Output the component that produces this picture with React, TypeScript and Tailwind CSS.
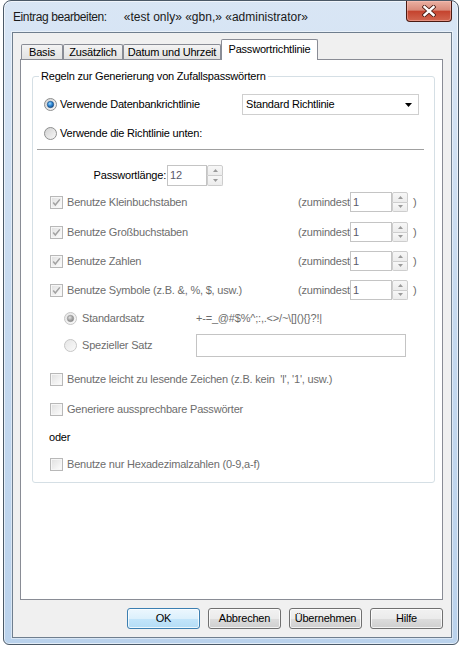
import React from "react";

function Radio({ checked = false, disabled = false }: { checked?: boolean; disabled?: boolean }) {
  return (
    <svg width="13" height="13" viewBox="0 0 13 13" className="shrink-0">
      <defs>
        <linearGradient id="rbg" x1="0" y1="0" x2="1" y2="1">
          <stop offset="0" stopColor="#cfcfcf" />
          <stop offset="1" stopColor="#fafafa" />
        </linearGradient>
        <linearGradient id="rbgd" x1="0" y1="0" x2="1" y2="1">
          <stop offset="0" stopColor="#e4e4e4" />
          <stop offset="1" stopColor="#fbfbfb" />
        </linearGradient>
        <radialGradient id="rdot" cx="0.4" cy="0.35" r="0.75">
          <stop offset="0" stopColor="#a9dcfb" />
          <stop offset="0.45" stopColor="#2f8ad8" />
          <stop offset="1" stopColor="#0d3f78" />
        </radialGradient>
        <radialGradient id="rdotd" cx="0.4" cy="0.35" r="0.75">
          <stop offset="0" stopColor="#e2e2e2" />
          <stop offset="0.5" stopColor="#a8a8a8" />
          <stop offset="1" stopColor="#7d7d7d" />
        </radialGradient>
      </defs>
      <circle cx="6.5" cy="6.5" r="6" fill={disabled ? "url(#rbgd)" : "url(#rbg)"} stroke={disabled ? "#c6c6c6" : "#8e8f8f"} />
      {checked && (
        <circle cx="6.5" cy="6.5" r="3.2" fill={disabled ? "url(#rdotd)" : "url(#rdot)"} stroke={disabled ? "#8e8e8e" : "#16487f"} strokeWidth="0.6" />
      )}
    </svg>
  );
}

function Check({ checked = false }: { checked?: boolean }) {
  return (
    <svg width="13" height="13" viewBox="0 0 13 13" className="shrink-0">
      <defs>
        <linearGradient id="cbg" x1="0" y1="0" x2="1" y2="1">
          <stop offset="0" stopColor="#e2e2e2" />
          <stop offset="1" stopColor="#fbfbfb" />
        </linearGradient>
      </defs>
      <rect x="0.5" y="0.5" width="12" height="12" fill="#f6f6f6" stroke="#b8b8b8" />
      <rect x="2" y="2" width="9" height="9" fill="url(#cbg)" />
      {checked && <path d="M3.2 6.6 L5.3 9 L9.8 3.4" fill="none" stroke="#a2a2a2" strokeWidth="1.5" />}
    </svg>
  );
}

function Spin({ tall = false }: { tall?: boolean }) {
  return (
    <div className={(tall ? "h-[21px]" : "h-[20px]") + " w-[16px] flex flex-col shrink-0"}>
      <div className="flex-1 border border-[#cdcdcd] rounded-t-[2px] bg-gradient-to-b from-[#f7f7f7] to-[#ececec] flex items-center justify-center">
        <svg width="5" height="3" viewBox="0 0 5 3">
          <path d="M0 3 L2.5 0 L5 3Z" fill="#9a9a9a" />
        </svg>
      </div>
      <div className="flex-1 border border-t-0 border-[#cdcdcd] rounded-b-[2px] bg-gradient-to-b from-[#f7f7f7] to-[#ececec] flex items-center justify-center">
        <svg width="5" height="3" viewBox="0 0 5 3">
          <path d="M0 0 L5 0 L2.5 3Z" fill="#9a9a9a" />
        </svg>
      </div>
    </div>
  );
}

function MinRow({ label, mt }: { label: string; mt: string }) {
  return (
    <div className={mt + " h-[20px] flex items-center pl-[17px] pr-[17px]"}>
      <Check checked />
      <span className="ml-[4px] text-[#6d6d6d] whitespace-nowrap">{label}</span>
      <div className="ml-auto flex items-center">
        <span className="w-[52px] text-[#6d6d6d] whitespace-nowrap">(zumindest</span>
        <div className="w-[42px] h-[20px] border border-[#c4c4c4] bg-white flex items-center pl-[2px] text-[#5a5a6a]">1</div>
        <Spin />
        <span className="ml-[5px] w-[4px] text-[#6d6d6d]">)</span>
      </div>
    </div>
  );
}

function Btn({ label, primary = false }: { label: string; primary?: boolean }) {
  return (
    <div
      className={
        "w-[73px] h-[21px] rounded-[3px] border flex items-center justify-center text-black shadow-[inset_0_0_0_1px_rgba(255,255,255,0.75)] " +
        (primary
          ? "border-[#3c7fb1] bg-[linear-gradient(to_bottom,#ecf7fe_0%,#dcf0fc_50%,#c3e5fa_50%,#b4ddf6_100%)]"
          : "border-[#707070] bg-[linear-gradient(to_bottom,#f2f2f2_0%,#ebebeb_50%,#dddddd_50%,#cfcfcf_100%)]")
      }
    >
      {label}
    </div>
  );
}

export default function App() {
  return (
    <div className="w-[462px] h-[647px] bg-white pl-[3px] font-['Liberation_Sans',Arial,sans-serif] text-[11px] tracking-[-0.2px] text-black">
      <div className="w-[456px] h-[645px] flex flex-col rounded-t-[8px] rounded-b-[6px] border border-[#4b5967] bg-gradient-to-b from-[#d9e6f5] via-[#c5d9ef] to-[#bad2ec] pl-[8px] pr-[6px] pb-[6px] shadow-[inset_0_0_0_1px_rgba(255,255,255,0.6)]">
        {/* Title bar */}
        <div className="h-[31px] flex items-start shrink-0">
          <div className="h-[31px] flex items-center pl-[1px] text-[12px] text-[#1a1a1a] whitespace-nowrap">
            <span className="tracking-[-0.4px]">Eintrag bearbeiten:</span>
            <span className="ml-[17px] tracking-[0px]">«test only» «gbn,» «administrator»</span>
          </div>
          <div className="ml-auto w-[46px] h-[21px] rounded-b-[4px] border border-t-0 border-[#4a1a12] bg-[linear-gradient(to_bottom,#eab0a2_0%,#d98b7b_45%,#c5442f_52%,#d26650_100%)] shadow-[inset_0_0_0_1px_rgba(255,200,190,0.45)] flex items-center justify-center">
            <svg width="14" height="12" viewBox="0 0 14 12">
              <path d="M2.5 2 L11.5 10 M11.5 2 L2.5 10" stroke="#4a1c14" strokeWidth="4.2" strokeLinecap="square" />
              <path d="M2.5 2 L11.5 10 M11.5 2 L2.5 10" stroke="#ffffff" strokeWidth="2.4" strokeLinecap="square" />
            </svg>
          </div>
        </div>

        {/* Client */}
        <div className="flex-1 flex flex-col border border-[#6f7e8e] bg-[#f0f0f0] shadow-[0_0_0_1px_rgba(255,255,255,0.45)]">
          <div className="pt-[6px] pl-[7px] pr-[8px]">
            {/* Tab strip */}
            <div className="h-[20px] flex items-end pl-[1px]">
              <div className="w-[42px] h-[15px] border border-b-0 border-[#898c95] rounded-t-[2px] bg-gradient-to-b from-[#f3f3f3] to-[#e2e2e2] flex items-center justify-center">
                Basis
              </div>
              <div className="w-[60px] h-[15px] border border-b-0 border-[#898c95] rounded-t-[2px] bg-gradient-to-b from-[#f3f3f3] to-[#e2e2e2] flex items-center justify-center">
                Zusätzlich
              </div>
              <div className="w-[98px] h-[15px] border border-b-0 border-[#898c95] rounded-t-[2px] bg-gradient-to-b from-[#f3f3f3] to-[#e2e2e2] flex items-center justify-center whitespace-nowrap">
                Datum und Uhrzeit
              </div>
              <div className="relative z-10 -mb-px w-[97px] h-[21px] border border-b-0 border-[#898c95] rounded-t-[2px] bg-white flex items-center justify-center pb-[2px] whitespace-nowrap">
                Passwortrichtlinie
              </div>
            </div>

            {/* Tab panel */}
            <div className="h-[541px] border border-[#898c95] bg-white">
              <fieldset className="mt-[9px] ml-[11px] mr-[7px] border border-[#d5dfe5] rounded-[3px] pb-[8px]">
                <legend className="ml-[6px] px-[2px] leading-[14px]">Regeln zur Generierung von Zufallspasswörtern</legend>

                <div className="mt-[11px] h-[21px] flex items-center">
                  <div className="w-[209px] flex items-center pl-[11px]">
                    <Radio checked />
                    <span className="ml-[3px] whitespace-nowrap">Verwende Datenbankrichtlinie</span>
                  </div>
                  <div className="w-[177px] h-[21px] border border-[#cfcfcf] bg-white flex items-center pl-[3px] pr-[6px]">
                    <span className="whitespace-nowrap">Standard Richtlinie</span>
                    <svg className="ml-auto" width="7" height="4" viewBox="0 0 7 4">
                      <path d="M0 0 L7 0 L3.5 4Z" fill="#000" />
                    </svg>
                  </div>
                </div>

                <div className="mt-[8px] h-[20px] flex items-center pl-[11px]">
                  <Radio />
                  <span className="ml-[3px] whitespace-nowrap">Verwende die Richtlinie unten:</span>
                </div>

                <div className="mt-[6px] ml-[4px] mr-[10px] h-px bg-[#a0a0a0]" />

                <div className="mt-[15px] h-[21px] flex items-center">
                  <span className="w-[134px] pr-[1px] text-right whitespace-nowrap">Passwortlänge:</span>
                  <div className="w-[40px] h-[21px] border border-[#c4c4c4] bg-white flex items-center pl-[2px] text-[#5a5a6a]">12</div>
                  <Spin tall />
                </div>

                <MinRow mt="mt-[6px]" label="Benutze Kleinbuchstaben" />
                <MinRow mt="mt-[10px]" label="Benutze Großbuchstaben" />
                <MinRow mt="mt-[9px]" label="Benutze Zahlen" />
                <MinRow mt="mt-[9px]" label="Benutze Symbole (z.B. &, %, $, usw.)" />

                <div className="mt-[8px] h-[20px] flex items-center">
                  <div className="w-[163px] flex items-center pl-[31px]">
                    <Radio checked disabled />
                    <span className="ml-[5px] text-[#6d6d6d] whitespace-nowrap">Standardsatz</span>
                  </div>
                  <span className="text-[#6d6d6d] whitespace-nowrap">{"+-=_@#$%^;:,.<>/~\\[](){}?!|"}</span>
                </div>

                <div className="mt-[6px] h-[23px] flex items-center">
                  <div className="w-[163px] flex items-center pl-[31px]">
                    <Radio disabled />
                    <span className="ml-[5px] text-[#6d6d6d] whitespace-nowrap">Spezieller Satz</span>
                  </div>
                  <div className="w-[210px] h-[23px] border border-[#c4c4c4] bg-white" />
                </div>

                <div className="mt-[12px] h-[20px] flex items-center pl-[17px]">
                  <Check />
                  <span className="ml-[4px] text-[#6d6d6d] whitespace-pre">{"Benutze leicht zu lesende Zeichen (z.B. kein  'l', '1', usw.)"}</span>
                </div>

                <div className="mt-[10px] h-[20px] flex items-center pl-[17px]">
                  <Check />
                  <span className="ml-[4px] text-[#6d6d6d] whitespace-nowrap">Generiere aussprechbare Passwörter</span>
                </div>

                <div className="mt-[8px] h-[20px] flex items-center pl-[16px]">
                  <span>oder</span>
                </div>

                <div className="mt-[7px] h-[20px] flex items-center pl-[17px]">
                  <Check />
                  <span className="ml-[4px] text-[#6d6d6d] whitespace-nowrap">Benutze nur Hexadezimalzahlen (0-9,a-f)</span>
                </div>
              </fieldset>
            </div>
          </div>

          {/* Buttons */}
          <div className="mt-[8px] flex justify-end gap-[8px] pr-[8px]">
            <Btn label="OK" primary />
            <Btn label="Abbrechen" />
            <Btn label="Übernehmen" />
            <Btn label="Hilfe" />
          </div>
        </div>
      </div>
    </div>
  );
}
